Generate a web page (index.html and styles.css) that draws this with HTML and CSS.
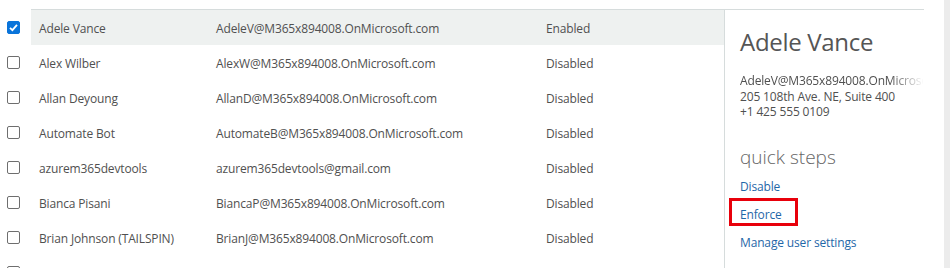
FILE: index.html
```html
<!DOCTYPE html>
<html>
<head>
<meta charset="utf-8">
<link rel="stylesheet" href="styles.css">
</head>
<body>
<div class="page">
  <div class="main">
    <div class="topline"></div>
    <div class="content">
      <div class="list">
        <div class="row selected">
          <span class="check checked"><svg viewBox="0 0 13 13" width="13" height="13"><path d="M3 6.8 L5.4 9.2 L10 3.8" fill="none" stroke="#fff" stroke-width="1.8"/></svg></span>
          <div class="cells"><span class="c-name">Adele Vance</span><span class="c-mail">AdeleV@M365x894008.OnMicrosoft.com</span><span class="c-stat">Enabled</span></div>
        </div>
        <div class="row">
          <span class="check"></span>
          <div class="cells"><span class="c-name">Alex Wilber</span><span class="c-mail">AlexW@M365x894008.OnMicrosoft.com</span><span class="c-stat">Disabled</span></div>
        </div>
        <div class="row">
          <span class="check"></span>
          <div class="cells"><span class="c-name">Allan Deyoung</span><span class="c-mail">AllanD@M365x894008.OnMicrosoft.com</span><span class="c-stat">Disabled</span></div>
        </div>
        <div class="row">
          <span class="check"></span>
          <div class="cells"><span class="c-name">Automate Bot</span><span class="c-mail">AutomateB@M365x894008.OnMicrosoft.com</span><span class="c-stat">Disabled</span></div>
        </div>
        <div class="row">
          <span class="check"></span>
          <div class="cells"><span class="c-name">azurem365devtools</span><span class="c-mail">azurem365devtools@gmail.com</span><span class="c-stat">Disabled</span></div>
        </div>
        <div class="row">
          <span class="check"></span>
          <div class="cells"><span class="c-name">Bianca Pisani</span><span class="c-mail">BiancaP@M365x894008.OnMicrosoft.com</span><span class="c-stat">Disabled</span></div>
        </div>
        <div class="row">
          <span class="check"></span>
          <div class="cells"><span class="c-name">Brian Johnson (TAILSPIN)</span><span class="c-mail">BrianJ@M365x894008.OnMicrosoft.com</span><span class="c-stat">Disabled</span></div>
        </div>
        <div class="row">
          <span class="check"></span>
          <div class="cells"></div>
        </div>
      </div>
      <div class="details">
        <h1 class="d-name">Adele Vance</h1>
        <div class="d-info">
          <div class="d-line fade">AdeleV@M365x894008.OnMicrosoft.com</div>
          <div class="d-line">205 108th Ave. NE, Suite 400</div>
          <div class="d-line">+1 425 555 0109</div>
        </div>
        <h2 class="d-steps">quick steps</h2>
        <div class="links">
          <a class="link">Disable</a>
          <a class="link boxed">Enforce</a>
          <a class="link">Manage user settings</a>
        </div>
      </div>
    </div>
  </div>
  <div class="scroll"></div>
</div>
</body>
</html>
```

FILE: styles.css
```css
html, body {
  margin: 0;
  padding: 0;
  background: #fff;
}
body {
  font-family: "Open Sans", "Noto Sans", sans-serif;
  color: #505050;
  width: 950px;
  height: 268px;
  overflow: hidden;
}
.page {
  display: flex;
  height: 268px;
}
.main {
  width: 944px;
  display: flex;
  flex-direction: column;
  padding-top: 9px;
  box-sizing: border-box;
}
.topline {
  margin-left: 31px;
  width: 893px;
  border-top: 1px solid #d6dcdc;
}
.content {
  display: flex;
  flex: 1;
}
.list {
  width: 724px;
  flex: none;
}
.row {
  display: flex;
  align-items: center;
  height: 35px;
}
.check {
  width: 13px;
  height: 13px;
  margin-left: 7px;
  margin-right: 11px;
  box-sizing: border-box;
  border: 1px solid #6e6e6e;
  border-radius: 2px;
  flex: none;
  display: flex;
}
.check.checked {
  background: #0a74da;
  border-color: #0a74da;
}
.check.checked svg {
  margin: -1px;
}
.cells {
  flex: 1;
  height: 100%;
  display: flex;
  align-items: center;
  padding-left: 8px;
  font-size: 12px;
  letter-spacing: -0.15px;
  white-space: nowrap;
  padding-top: 1px;
  box-sizing: border-box;
}
.selected .cells {
  background: #eef1f0;
}
.c-name {
  width: 177px;
}
.c-mail {
  width: 330px;
}
.details {
  width: 199px;
  flex: none;
  border-left: 1px solid #d6dcdc;
  padding-left: 15px;
  box-sizing: border-box;
  overflow: hidden;
  white-space: nowrap;
}
.d-name {
  margin: 16px 0 0;
  font-size: 24px;
  font-weight: 400;
  line-height: 32px;
  color: #555;
  letter-spacing: -0.3px;
}
.d-info {
  margin-top: 15px;
  font-size: 12px;
  line-height: 15.5px;
  letter-spacing: -0.15px;
}
.fade {
  -webkit-mask-image: linear-gradient(to right, #000 150px, transparent 184px);
  mask-image: linear-gradient(to right, #000 150px, transparent 184px);
}
.d-steps {
  margin: 25px 0 0;
  font-size: 19px;
  font-weight: 300;
  line-height: 24px;
  color: #666;
}
.links {
  display: flex;
  flex-direction: column;
  align-items: flex-start;
  margin-top: 4px;
}
.link {
  font-size: 12px;
  letter-spacing: -0.15px;
  color: #1f67a8;
  line-height: 28px;
  height: 28px;
}
.link.boxed {
  margin: -3px 0 3px -11px;
  padding: 0 13px 0 8px;
  border: 3px solid #e8000b;
  height: 22px;
}
.scroll {
  width: 6px;
  background: #ececec;
}
```
